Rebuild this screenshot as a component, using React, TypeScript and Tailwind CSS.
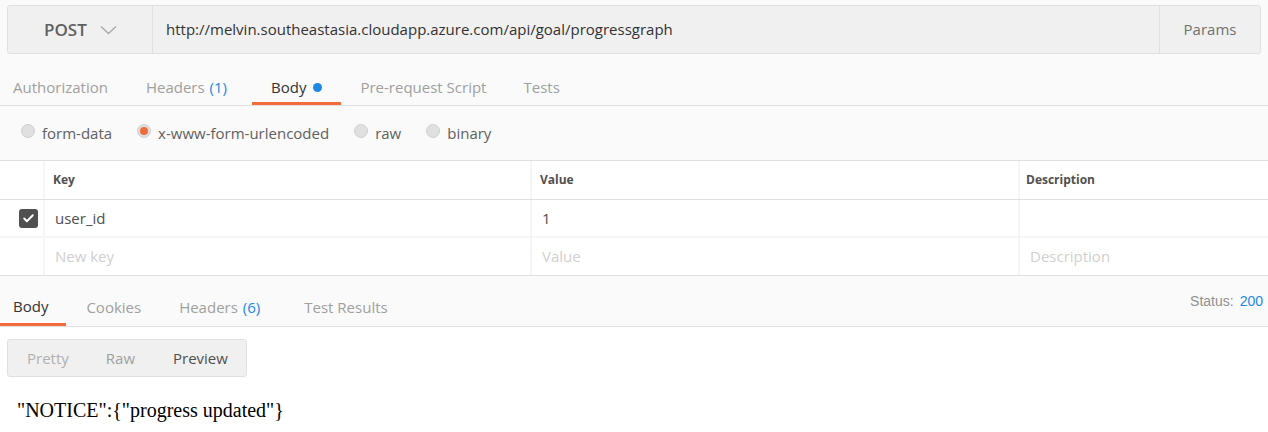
import { Check } from 'lucide-react';

const bodyModes = [
    { label: 'form-data' },
    { label: 'x-www-form-urlencoded', checked: true },
    { label: 'raw' },
    { label: 'binary' },
];

function Radio({ checked }: { checked?: boolean }) {
    return (
        <span className="flex size-[14px] items-center justify-center rounded-full border border-[#d0d0d0] bg-[#e0e0e0]">
            {checked && <span className="size-[8px] rounded-full bg-[#f26b3a]" />}
        </span>
    );
}

export default function App() {
    return (
        <div
            className="h-[432px] w-[1268px] overflow-hidden bg-[#fafafa] text-[15px] text-[#505050]"
            style={{ fontFamily: '"Open Sans", sans-serif' }}
        >
            {/* url bar */}
            <div className="px-[7px] pt-[5px]">
                <div className="flex h-[49px] rounded-[3px] border border-[#e0e0e0] bg-[#f0f0f0]">
                    <div className="flex w-[145px] items-center gap-[13px] border-r border-[#e0e0e0] pl-[36px] text-[17px] font-semibold text-[#606060]">
                        POST
                        <svg width="17" height="10" viewBox="0 0 17 10" fill="none" className="mt-[1px]">
                            <path d="M1 1.5l7.5 7 7.5-7" stroke="#a8a8a8" strokeWidth="1.4" />
                        </svg>
                    </div>
                    <div className="flex flex-1 items-center pl-[13px] text-[#333]">
                        http://melvin.southeastasia.cloudapp.azure.com/api/goal/progressgraph
                    </div>
                    <div className="flex w-[101px] items-center justify-center border-l border-[#e0e0e0] text-[#707070]">
                        Params
                    </div>
                </div>
            </div>

            {/* request tabs */}
            <div className="mt-[16px] flex h-[36px] items-stretch border-b border-[#e0e0e0]">
                <div className="flex items-center pl-[13px] pr-[38px] text-[#a0a0a0]">Authorization</div>
                <div className="flex items-center pr-[25px] text-[#a0a0a0]">
                    Headers <span className="ml-[5px] text-[#1e88e5]">(1)</span>
                </div>
                <div className="flex items-center border-b-[3px] border-[#f26b3a] pl-[19px] pr-[19px] pt-[3px] text-[#333]">
                    Body
                    <span className="ml-[7px] size-[9px] rounded-full bg-[#1e88e5]" />
                </div>
                <div className="flex items-center pl-[19px] pr-[37px] text-[#a0a0a0]">Pre-request Script</div>
                <div className="flex items-center text-[#a0a0a0]">Tests</div>
            </div>

            {/* body mode */}
            <div className="flex h-[55px] items-center gap-[25px] border-b border-[#e0e0e0] pl-[21px]">
                {bodyModes.map((m) => (
                    <label key={m.label} className="flex items-center gap-[7px] text-[#606060]">
                        <span className="-mt-[4px]">
                            <Radio checked={m.checked} />
                        </span>
                        {m.label}
                    </label>
                ))}
            </div>

            {/* key value table */}
            <div className="bg-white">
                <div className="grid h-[39px] grid-cols-[45px_487px_488px_1fr] border-b border-[#e0e0e0] text-[12px] font-bold text-[#505050]">
                    <div className="border-r-[2px] border-[#f5f5f5]" />
                    <div className="flex items-center border-r-[2px] border-[#f5f5f5] pl-[8px]">Key</div>
                    <div className="flex items-center border-r-[2px] border-[#f5f5f5] pl-[8px]">Value</div>
                    <div className="flex items-center pl-[6px]">Description</div>
                </div>
                <div className="grid h-[38px] grid-cols-[45px_487px_488px_1fr] border-b-[2px] border-[#f5f5f5] text-[#505050]">
                    <div className="flex items-center justify-end border-r-[2px] border-[#f5f5f5] pr-[5px]">
                        <span className="flex size-[19px] items-center justify-center rounded-[3px] bg-[#505050]">
                            <Check className="size-[13px] text-white" strokeWidth={3.5} />
                        </span>
                    </div>
                    <div className="flex items-center border-r-[2px] border-[#f5f5f5] pl-[10px]">user_id</div>
                    <div className="flex items-center border-r-[2px] border-[#f5f5f5] pl-[10px]">1</div>
                    <div />
                </div>
                <div className="grid h-[38px] grid-cols-[45px_487px_488px_1fr] border-b border-[#e0e0e0] text-[#d0d0d0]">
                    <div className="border-r-[2px] border-[#f5f5f5]" />
                    <div className="flex items-center border-r-[2px] border-[#f5f5f5] pl-[10px]">New key</div>
                    <div className="flex items-center border-r-[2px] border-[#f5f5f5] pl-[10px]">Value</div>
                    <div className="flex items-center pl-[10px]">Description</div>
                </div>
            </div>

            {/* response tabs */}
            <div className="flex h-[51px] items-stretch border-b border-[#e0e0e0]">
                <div className="flex items-center border-b-[3px] border-[#f26b3a] pl-[13px] pr-[18px] pt-[13px] text-[#333]">
                    Body
                </div>
                <div className="flex items-center pl-[20px] pr-[38px] pt-[13px] text-[#a0a0a0]">Cookies</div>
                <div className="flex items-center pr-[44px] pt-[13px] text-[#a0a0a0]">
                    Headers <span className="ml-[5px] text-[#1e88e5]">(6)</span>
                </div>
                <div className="flex items-center pt-[13px] text-[#a0a0a0]">Test Results</div>
                <div
                    className="ml-auto mr-[5px] flex items-start gap-[6px] pt-[15px] text-[14px]"
                    style={{ fontFamily: '"Liberation Sans", Arial, sans-serif' }}
                >
                    <span className="text-[#909090]">Status:</span>
                    <span className="text-[#1e88e5]">200</span>
                </div>
            </div>

            {/* response body */}
            <div className="h-[110px] bg-white px-[7px] pt-[12px]">
                <div className="flex h-[38px] w-[240px] items-center rounded-[3px] border border-[#e0e0e0] bg-[#f0f0f0]">
                    <div className="pl-[19px] pr-[37px] text-[#b0b0b0]">Pretty</div>
                    <div className="pr-[38px] text-[#a0a0a0]">Raw</div>
                    <div className="text-[#505050]">Preview</div>
                </div>
                <div
                    className="mt-[21px] pl-[10px] text-[20px] leading-[24px] text-black"
                    style={{ fontFamily: '"Liberation Serif", "Times New Roman", serif' }}
                >
                    "NOTICE":{'{'}"progress updated"{'}'}
                </div>
            </div>
        </div>
    );
}
